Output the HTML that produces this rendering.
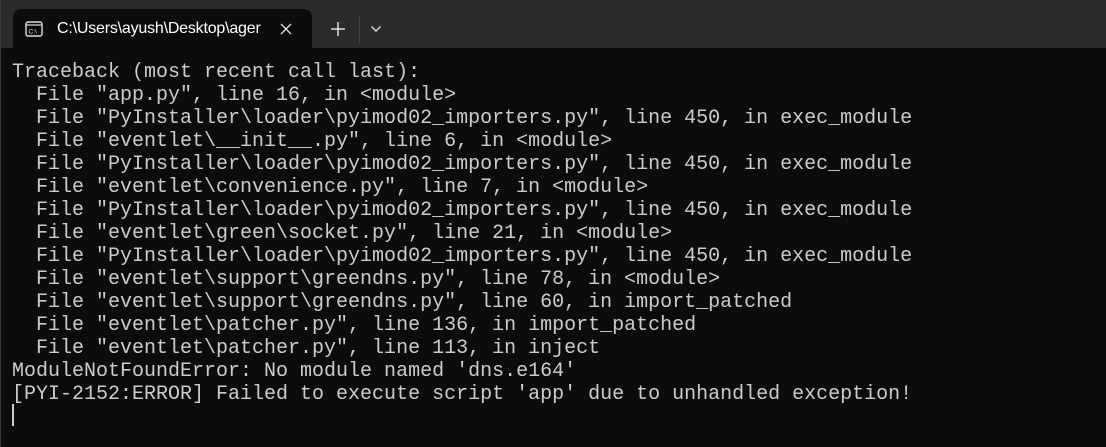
<!DOCTYPE html>
<html><head><style>
html,body{margin:0;padding:0;width:1106px;height:447px;overflow:hidden;background:#0c0c0c}
.bar{position:absolute;left:0;top:0;width:1106px;height:48px;background:#2b2b2b}
.edge{position:absolute;left:0;top:0;width:1px;height:447px;background:#3a3a3a}
.tab{position:absolute;left:13px;top:9px;width:299px;height:39px;background:#0c0c0c;border-radius:8px 8px 0 0}
.title{position:absolute;left:57px;top:20px;font:16px "Liberation Sans",sans-serif;color:#fff;letter-spacing:-0.2px}
.sep{position:absolute;left:359px;top:15px;width:1px;height:28px;background:#444}
pre{position:absolute;left:12px;top:61px;margin:0;font:20px/23px "Liberation Mono",monospace;color:#cccccc}
.cur{position:absolute;left:12px;top:404px;width:2px;height:22px;background:#ccc}
</style></head><body>
<div class="bar"></div><div class="edge"></div>
<div class="tab"></div>
<svg style="position:absolute;left:25px;top:21px" width="18" height="16" viewBox="0 0 18 16"><rect x="1" y="1" width="16" height="14" rx="2" fill="none" stroke="#ddd" stroke-width="1.4"/><line x1="1" y1="4" x2="17" y2="4" stroke="#ddd" stroke-width="1.2"/><text x="3.5" y="12.5" font-size="6.5" font-family="Liberation Sans" fill="#ddd">C:\</text></svg>
<div class="title">C:\Users\ayush\Desktop\ager</div>
<svg style="position:absolute;left:280px;top:23px" width="12" height="12" viewBox="0 0 12 12"><path d="M1 1 L11 11 M11 1 L1 11" stroke="#ddd" stroke-width="1.3"/></svg>
<svg style="position:absolute;left:331px;top:22px" width="14" height="14" viewBox="0 0 14 14"><path d="M7 0 V14 M0 7 H14" stroke="#ddd" stroke-width="1.5"/></svg>
<div class="sep"></div>
<svg style="position:absolute;left:370px;top:25px" width="12" height="8" viewBox="0 0 12 8"><path d="M1.5 1.5 L6 6 L10.5 1.5" fill="none" stroke="#ddd" stroke-width="1.4"/></svg>
<pre>Traceback (most recent call last):
  File "app.py", line 16, in &lt;module&gt;
  File "PyInstaller\loader\pyimod02_importers.py", line 450, in exec_module
  File "eventlet\__init__.py", line 6, in &lt;module&gt;
  File "PyInstaller\loader\pyimod02_importers.py", line 450, in exec_module
  File "eventlet\convenience.py", line 7, in &lt;module&gt;
  File "PyInstaller\loader\pyimod02_importers.py", line 450, in exec_module
  File "eventlet\green\socket.py", line 21, in &lt;module&gt;
  File "PyInstaller\loader\pyimod02_importers.py", line 450, in exec_module
  File "eventlet\support\greendns.py", line 78, in &lt;module&gt;
  File "eventlet\support\greendns.py", line 60, in import_patched
  File "eventlet\patcher.py", line 136, in import_patched
  File "eventlet\patcher.py", line 113, in inject
ModuleNotFoundError: No module named 'dns.e164'
[PYI-2152:ERROR] Failed to execute script 'app' due to unhandled exception!</pre>
<div class="cur"></div>
</body></html>
